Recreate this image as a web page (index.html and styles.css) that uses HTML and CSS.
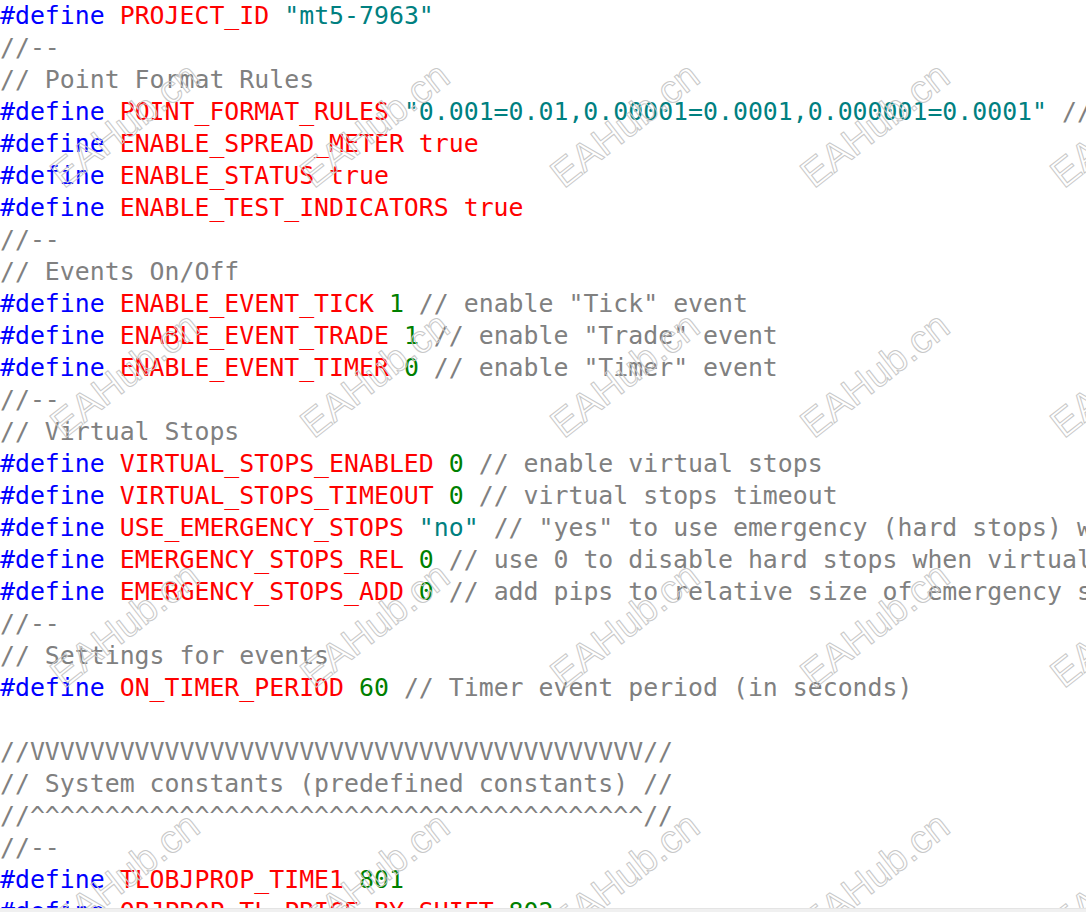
FILE: index.html
```html
<!DOCTYPE html>
<html>
<head>
<meta charset="utf-8">
<link rel="stylesheet" href="styles.css">
</head>
<body>
<div class="viewer">
<div class="code">
<div class="ln"><span class="kw">#define</span> <span class="id">PROJECT_ID</span> <span class="str">"mt5-7963"</span></div>
<div class="ln"><span class="cm">//--</span></div>
<div class="ln"><span class="cm">// Point Format Rules</span></div>
<div class="ln"><span class="kw">#define</span> <span class="id">POINT_FORMAT_RULES</span> <span class="str">"0.001=0.01,0.00001=0.0001,0.000001=0.0001"</span> <span class="cm">// points in decimal</span></div>
<div class="ln"><span class="kw">#define</span> <span class="id">ENABLE_SPREAD_METER</span> <span class="id">true</span></div>
<div class="ln"><span class="kw">#define</span> <span class="id">ENABLE_STATUS</span> <span class="id">true</span></div>
<div class="ln"><span class="kw">#define</span> <span class="id">ENABLE_TEST_INDICATORS</span> <span class="id">true</span></div>
<div class="ln"><span class="cm">//--</span></div>
<div class="ln"><span class="cm">// Events On/Off</span></div>
<div class="ln"><span class="kw">#define</span> <span class="id">ENABLE_EVENT_TICK</span> <span class="num">1</span> <span class="cm">// enable "Tick" event</span></div>
<div class="ln"><span class="kw">#define</span> <span class="id">ENABLE_EVENT_TRADE</span> <span class="num">1</span> <span class="cm">// enable "Trade" event</span></div>
<div class="ln"><span class="kw">#define</span> <span class="id">ENABLE_EVENT_TIMER</span> <span class="num">0</span> <span class="cm">// enable "Timer" event</span></div>
<div class="ln"><span class="cm">//--</span></div>
<div class="ln"><span class="cm">// Virtual Stops</span></div>
<div class="ln"><span class="kw">#define</span> <span class="id">VIRTUAL_STOPS_ENABLED</span> <span class="num">0</span> <span class="cm">// enable virtual stops</span></div>
<div class="ln"><span class="kw">#define</span> <span class="id">VIRTUAL_STOPS_TIMEOUT</span> <span class="num">0</span> <span class="cm">// virtual stops timeout</span></div>
<div class="ln"><span class="kw">#define</span> <span class="id">USE_EMERGENCY_STOPS</span> <span class="str">"no"</span> <span class="cm">// "yes" to use emergency (hard stops) when virtual stops are in use</span></div>
<div class="ln"><span class="kw">#define</span> <span class="id">EMERGENCY_STOPS_REL</span> <span class="num">0</span> <span class="cm">// use 0 to disable hard stops when virtual stops are enabled</span></div>
<div class="ln"><span class="kw">#define</span> <span class="id">EMERGENCY_STOPS_ADD</span> <span class="num">0</span> <span class="cm">// add pips to relative size of emergency stops</span></div>
<div class="ln"><span class="cm">//--</span></div>
<div class="ln"><span class="cm">// Settings for events</span></div>
<div class="ln"><span class="kw">#define</span> <span class="id">ON_TIMER_PERIOD</span> <span class="num">60</span> <span class="cm">// Timer event period (in seconds)</span></div>
<div class="ln"> </div>
<div class="ln"><span class="cm">//VVVVVVVVVVVVVVVVVVVVVVVVVVVVVVVVVVVVVVVVV//</span></div>
<div class="ln"><span class="cm">// System constants (predefined constants) //</span></div>
<div class="ln"><span class="cm">//^^^^^^^^^^^^^^^^^^^^^^^^^^^^^^^^^^^^^^^^^//</span></div>
<div class="ln"><span class="cm">//--</span></div>
<div class="ln"><span class="kw">#define</span> <span class="id">TLOBJPROP_TIME1</span> <span class="num">801</span></div>
<div class="ln"><span class="kw">#define</span> <span class="id">OBJPROP_TL_PRICE_BY_SHIFT</span> <span class="num">802</span></div>
</div>
<div class="marks">
<span class="wm">EAHub.cn</span><span class="wm">EAHub.cn</span><span class="wm">EAHub.cn</span><span class="wm">EAHub.cn</span><span class="wm">EAHub.cn</span>
<span class="wm">EAHub.cn</span><span class="wm">EAHub.cn</span><span class="wm">EAHub.cn</span><span class="wm">EAHub.cn</span><span class="wm">EAHub.cn</span>
<span class="wm">EAHub.cn</span><span class="wm">EAHub.cn</span><span class="wm">EAHub.cn</span><span class="wm">EAHub.cn</span><span class="wm">EAHub.cn</span>
<span class="wm">EAHub.cn</span><span class="wm">EAHub.cn</span><span class="wm">EAHub.cn</span><span class="wm">EAHub.cn</span><span class="wm">EAHub.cn</span>
</div>
</div>
<div class="hbar"></div>
</body>
</html>
```
FILE: styles.css
```css
html, body {
  margin: 0;
  padding: 0;
  background: #ffffff;
  overflow: hidden;
}
body {
  width: 1086px;
  height: 912px;
  display: flex;
  flex-direction: column;
}
.viewer {
  position: relative;
  height: 908px;
  overflow: hidden;
}
.code {
  font-family: "DejaVu Sans Mono", "Liberation Mono", monospace;
  font-size: 24.85px;
  line-height: 32px;
  color: #808080;
}
.ln {
  height: 32px;
  white-space: pre;
}
.kw { color: #0000ff; }
.id { color: #ff0000; }
.str { color: #008080; }
.num { color: #008000; }
.cm { color: #808080; }

.marks {
  position: absolute;
  left: 0;
  top: 0;
  display: grid;
  grid-template-columns: repeat(5, 250px);
  grid-auto-rows: 250px;
  pointer-events: none;
}
.wm {
  display: flex;
  align-items: center;
  justify-content: center;
  font-family: "Liberation Sans", Arial, sans-serif;
  font-size: 39px;
  color: transparent;
  -webkit-text-stroke: 1px #c8c8c8;
  transform: rotate(-38deg);
}
.hbar {
  height: 3px;
  background: #f0f0f0;
  border-top: 1px solid #e4e4e4;
}
```
